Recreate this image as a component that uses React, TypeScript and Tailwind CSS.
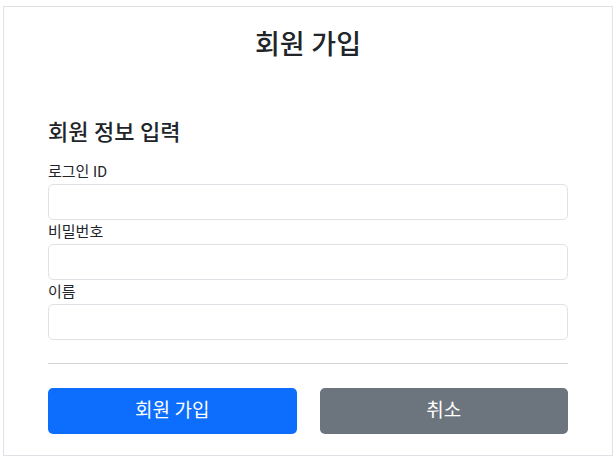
import { useState } from "react";

const fields = [
  { id: "loginId", label: "로그인 ID", type: "text" },
  { id: "password", label: "비밀번호", type: "password" },
  { id: "name", label: "이름", type: "text" },
];

export default function App() {
  const [values, setValues] = useState<Record<string, string>>({});

  return (
    <div className="min-h-screen bg-white px-[3px] pt-[6px] font-[family-name:Roboto,'Noto_Sans_CJK_KR',sans-serif] text-[#212529]">
      <div className="h-[450px] border border-[#dee2e6] px-[44px]">
        {/* 제목 */}
        <div className="mt-[22px] text-center text-[27px] font-medium leading-[32px]">
          회원 가입
        </div>

        <form onSubmit={(e) => e.preventDefault()}>
          <h4 className="mt-[58px] mb-[14px] text-[22px] font-medium leading-[27px]">
            회원 정보 입력
          </h4>

          {fields.map((f) => (
            <div key={f.id}>
              <label htmlFor={f.id} className="block text-[15px] leading-[24px]">
                {f.label}
              </label>
              <input
                id={f.id}
                type={f.type}
                value={values[f.id] ?? ""}
                onChange={(e) => setValues({ ...values, [f.id]: e.target.value })}
                className="block h-[36px] w-full rounded-[5px] border border-[#dee2e6] px-3 text-base outline-none"
              />
            </div>
          ))}

          <hr className="mt-[23px] border-t border-[#d3d4d5]" />

          <div className="mt-[24px] flex gap-[23px]">
            <button
              type="submit"
              className="h-[46px] flex-1 rounded-[5px] bg-[#0d6efd] text-[19px] text-white"
            >
              회원 가입
            </button>
            <button
              type="button"
              className="h-[46px] flex-1 rounded-[5px] bg-[#6c757d] text-[19px] text-white"
            >
              취소
            </button>
          </div>
        </form>
      </div>
    </div>
  );
}
